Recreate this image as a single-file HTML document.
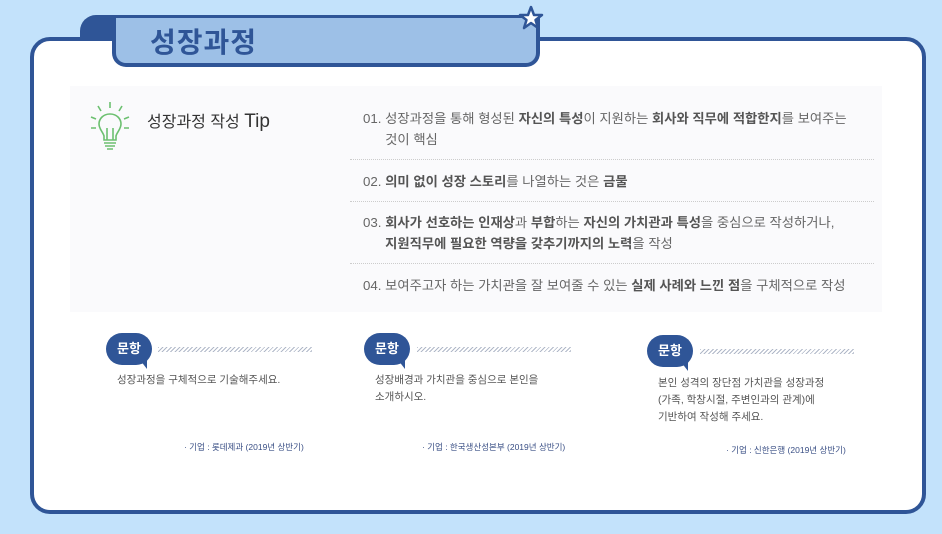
<!DOCTYPE html><html><head><meta charset="utf-8"><style>
body{margin:0;width:942px;height:534px;background:#c3e2fb;position:relative;overflow:hidden;font-family:"Liberation Sans","Noto Sans CJK KR",sans-serif;}
.panel{position:absolute;left:30px;top:37px;width:888px;height:469px;border:4px solid #2f5597;border-radius:20px;background:#fff;}
.tabL{position:absolute;left:80px;top:15px;width:60px;height:26px;background:#2f5597;border-radius:16px 0 0 0;}
.tab{position:absolute;left:112px;top:15px;width:420px;height:45px;background:#9dc0e7;border:4px solid #2f5597;border-top-width:3px;border-radius:0 0 14px 14px;}
.title{position:absolute;left:150px;top:21px;font-size:28px;font-weight:bold;color:#2f5597;letter-spacing:1px;}
.tipbox{position:absolute;left:70px;top:86px;width:812px;height:226px;background:#fafafc;}
.tiph{position:absolute;left:147px;top:108px;font-size:16px;color:#333;}
.tiph span{font-size:19px;}
.item{position:absolute;left:363px;font-size:13.3px;color:#666;line-height:21px;}
.item b{color:#555;}
.sep{position:absolute;left:350px;width:524px;border-top:1px dotted #ccc;}
.bub{position:absolute;width:46px;height:32px;background:#2f5597;border-radius:16px;color:#fff;font-size:13px;font-weight:bold;text-align:center;line-height:31px;}
.tail{position:absolute;width:0;height:0;border-left:7px solid transparent;border-top:9px solid #2f5597;}
.hatch{position:absolute;height:5px;background:repeating-linear-gradient(135deg,#b0b8c8 0 1px,transparent 1px 3px);}
.qt{position:absolute;font-size:10.5px;color:#555;line-height:17px;}
.co{position:absolute;font-size:8.5px;color:#3a4f85;}
</style></head><body>
<div class="panel"></div>
<div class="tabL"></div>
<div class="tab"></div>
<div class="title">성장과정</div>
<svg style="position:absolute;left:518px;top:5px" width="26" height="26" viewBox="0 0 26 26"><polygon points="13,2 16,10 24,10 17.5,15 20,23 13,18 6,23 8.5,15 2,10 10,10" fill="#fff" stroke="#2f5597" stroke-width="2.5" stroke-linejoin="round"/></svg>
<div class="tipbox"></div>
<svg style="position:absolute;left:88px;top:100px" width="44" height="52" viewBox="0 0 44 52" fill="none" stroke="#6cc070" stroke-width="1.6"><path d="M22 14c-7 0-11 5-11 10 0 5 4 8 5 12v4h12v-4c1-4 5-7 5-12 0-5-4-10-11-10z"/><path d="M19 40v-12M25 40v-12M16 43h12M17 46h10M19 49h6"/><path d="M22 2v6M10 6l3 5M34 6l-3 5M3 17l5 2M41 17l-5 2M3 28h5M36 28h5"/></svg>
<div class="tiph">성장과정 작성 <span>Tip</span></div>
<div class="item" style="top:108px">01. 성장과정을 통해 형성된 <b>자신의 특성</b>이 지원하는 <b>회사와 직무에 적합한지</b>를 보여주는<br>&nbsp;&nbsp;&nbsp;&nbsp;&nbsp;&nbsp;것이 핵심</div>
<div class="sep" style="top:159px"></div>
<div class="item" style="top:171px">02. <b>의미 없이 성장 스토리</b>를 나열하는 것은 <b>금물</b></div>
<div class="sep" style="top:201px"></div>
<div class="item" style="top:212px">03. <b>회사가 선호하는 인재상</b>과 <b>부합</b>하는 <b>자신의 가치관과 특성</b>을 중심으로 작성하거나,<br>&nbsp;&nbsp;&nbsp;&nbsp;&nbsp;&nbsp;<b>지원직무에 필요한 역량을 갖추기까지의 노력</b>을 작성</div>
<div class="sep" style="top:263px"></div>
<div class="item" style="top:275px">04. 보여주고자 하는 가치관을 잘 보여줄 수 있는 <b>실제 사례와 느낀 점</b>을 구체적으로 작성</div>

<div class="bub" style="left:106px;top:333px">문항</div><div class="tail" style="left:140px;top:360px"></div>
<div class="hatch" style="left:158px;top:347px;width:154px"></div>
<div class="qt" style="left:117px;top:372px">성장과정을 구체적으로 기술해주세요.</div>
<div class="co" style="left:184px;top:441px">· 기업 : 롯데제과 (2019년 상반기)</div>

<div class="bub" style="left:364px;top:333px">문항</div><div class="tail" style="left:398px;top:360px"></div>
<div class="hatch" style="left:417px;top:347px;width:154px"></div>
<div class="qt" style="left:375px;top:372px">성장배경과 가치관을 중심으로 본인을<br>소개하시오.</div>
<div class="co" style="left:422px;top:441px">· 기업 : 한국생산성본부 (2019년 상반기)</div>

<div class="bub" style="left:647px;top:335px">문항</div><div class="tail" style="left:681px;top:362px"></div>
<div class="hatch" style="left:700px;top:349px;width:154px"></div>
<div class="qt" style="left:658px;top:375px">본인 성격의 장단점 가치관을 성장과정<br>(가족, 학창시절, 주변인과의 관계)에<br>기반하여 작성해 주세요.</div>
<div class="co" style="left:726px;top:444px">· 기업 : 신한은행 (2019년 상반기)</div>
</body></html>
